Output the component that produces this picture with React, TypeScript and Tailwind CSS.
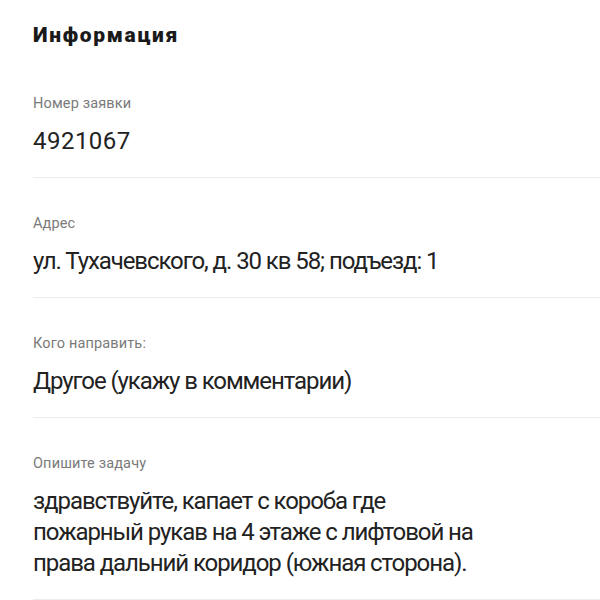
import React from 'react';

type Field = {
  label: string;
  value: string;
  numeric?: boolean;
};

const fields: Field[] = [
  { label: 'Номер заявки', value: '4921067', numeric: true },
  { label: 'Адрес', value: 'ул. Тухачевского, д. 30 кв 58; подъезд: 1' },
  { label: 'Кого направить:', value: 'Другое (укажу в комментарии)' },
  {
    label: 'Опишите задачу',
    value: 'здравствуйте, капает с короба где\nпожарный рукав на 4 этаже с лифтовой на\nправа дальний коридор (южная сторона).',
  },
];

export default function App() {
  return (
    <div className="min-h-[600px] bg-white pl-[33px] pt-[21px] font-['Roboto','Noto_Sans',sans-serif]">
      {/* Section title */}
      <h2 className="mb-[9px] text-[21px] font-black leading-[28px] tracking-[0.08em] text-[#1a1a1a]">Информация</h2>

      {fields.map((field) => (
        <div key={field.label} className="border-b border-[#ececec] pt-[36px] pb-[20px]">
          <p className="text-[14.5px] leading-[20px] tracking-[0.01em] text-[#7a7a7a]">{field.label}</p>
          <p
            className={
              field.numeric
                ? 'mt-[12px] text-[24px] leading-[31px] tracking-[0.02em] text-[#222222]'
                : 'mt-[12px] whitespace-pre-line text-[24px] leading-[31px] tracking-[-0.045em] text-[#222222]'
            }
          >
            {field.value}
          </p>
        </div>
      ))}
    </div>
  );
}
